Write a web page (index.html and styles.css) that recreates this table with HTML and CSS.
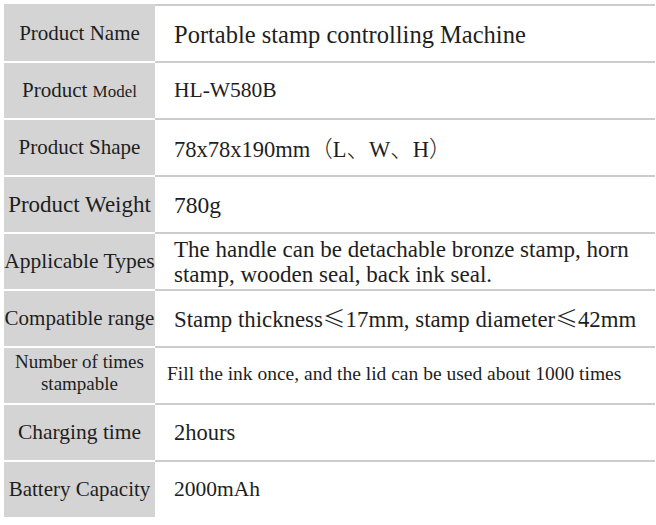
FILE: index.html
```html
<!DOCTYPE html>
<html lang="en">
<head>
<meta charset="utf-8">
<title>Product Specification</title>
<link rel="stylesheet" href="styles.css">
</head>
<body>
<div class="spec">
  <div class="label first">Product Name</div>
  <div class="value first v-name">Portable stamp controlling Machine</div>

  <div class="label"><span>Product <span class="small">Model</span></span></div>
  <div class="value">HL-W580B</div>

  <div class="label">Product Shape</div>
  <div class="value v-shape"><span>78x78x190mm<span class="cjk">（</span>L<span class="cjk">、</span>W<span class="cjk">、</span>H<span class="cjk">）</span></span></div>

  <div class="label l-weight">Product Weight</div>
  <div class="value v-weight">780g</div>

  <div class="label l-types">Applicable Types</div>
  <div class="value v-types">The handle can be detachable bronze stamp, horn stamp, wooden seal, back ink seal.</div>

  <div class="label l-range">Compatible range</div>
  <div class="value v-range"><span>Stamp thickness<span class="cjk">≤</span>17mm, stamp diameter<span class="cjk">≤</span>42mm</span></div>

  <div class="label l-times">Number of times<br>stampable</div>
  <div class="value v-small">Fill the ink once, and the lid can be used about 1000 times</div>

  <div class="label l-charge">Charging time</div>
  <div class="value v-big">2hours</div>

  <div class="label last">Battery Capacity</div>
  <div class="value last">2000mAh</div>
</div>
</body>
</html>
```
FILE: styles.css
```css
html, body {
  margin: 0;
  padding: 0;
  background: #ffffff;
}

body {
  font-family: "Liberation Serif", "Noto Sans CJK SC", serif;
  color: #1e1e1e;
}

.spec {
  display: grid;
  grid-template-columns: 151px 500px;
  grid-auto-rows: 57px;
  margin: 4px 0 0 4px;
}

.label {
  background: #d4d4d4;
  border-top: 2px solid #ffffff;
  display: flex;
  align-items: center;
  justify-content: center;
  text-align: center;
  font-size: 21px;
  line-height: 1.1;
  white-space: nowrap;
}

.label.first {
  border-top-color: #d4d4d4;
}

.value {
  border-top: 2px solid #cccccc;
  display: flex;
  align-items: center;
  padding-left: 19px;
  font-size: 21.5px;
  line-height: 1.1;
  white-space: nowrap;
}

.cjk {
  font-family: "Noto Sans CJK SC", "Liberation Serif", sans-serif;
  font-weight: 300;
}

.label.last {
  height: 61px;
  padding-bottom: 4px;
  box-sizing: border-box;
}

.value.last {
  border-bottom: 2px solid #cccccc;
  height: 63px;
  padding-bottom: 4px;
  box-sizing: border-box;
}

.small {
  font-size: 17px;
}

.v-name {
  font-size: 24.5px;
  padding-top: 4px;
}

.v-shape {
  font-size: 22.5px;
  padding-top: 2px;
}

.v-weight {
  font-size: 23.5px;
  padding-top: 2px;
}

.v-big {
  font-size: 22.5px;
  padding-top: 1px;
}

.v-range {
  font-size: 22.8px;
  padding-top: 1px;
}

.l-weight {
  font-size: 23px;
}

.l-types {
  font-size: 21.5px;
}

.l-range {
  font-size: 21px;
}

.l-charge {
  font-size: 21.5px;
}

.l-times {
  font-size: 19px;
  line-height: 22px;
  white-space: normal;
  padding-bottom: 5px;
}

.v-types {
  font-size: 23px;
  line-height: 24.5px;
  white-space: normal;
  align-items: flex-end;
  padding-bottom: 2px;
}

.v-small {
  font-size: 19.5px;
  padding-left: 12px;
  padding-bottom: 4px;
}
```
